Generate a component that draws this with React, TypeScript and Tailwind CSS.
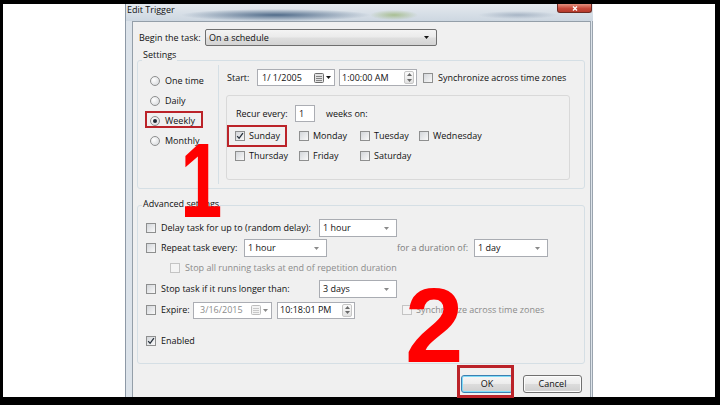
function Check({ on = false, dim = false }: { on?: boolean; dim?: boolean }) {
  const box = dim
    ? 'border-[#c4c4c4] bg-[#f4f4f4]'
    : 'border-[#8e8f8f] bg-[linear-gradient(135deg,#d3d6da,#f9f9f9)]';
  return (
    <span className={`flex h-[10px] w-[10px] shrink-0 items-center justify-center border ${box}`}>
      {on && (
        <svg width="8" height="8" viewBox="0 0 8 8">
          <path d="M1.2 4.1 3.1 6.3 6.9 1.1" fill="none" stroke="#27303b" strokeWidth="1.3" />
        </svg>
      )}
    </span>
  );
}

function Radio({ on = false }: { on?: boolean }) {
  return (
    <span className="flex h-[10px] w-[10px] shrink-0 items-center justify-center rounded-full border border-[#8e8f8f] bg-[radial-gradient(circle_at_35%_35%,#ffffff,#d2d4d7)]">
      {on && <span className="h-[4px] w-[4px] rounded-full bg-[#1d2733]" />}
    </span>
  );
}

function Arrow({ dark = false }: { dark?: boolean }) {
  return (
    <svg width="5" height="3" viewBox="0 0 5 3" className="shrink-0">
      <path d="M0 0h5L2.5 3z" fill={dark ? '#151515' : '#8a8a8a'} />
    </svg>
  );
}

function Combo({ value, size, plain = false }: { value: string; size: string; plain?: boolean }) {
  const look = plain
    ? 'border-[#a9acb2] bg-white'
    : 'rounded-[2px] border-[#6f6f6f] bg-[linear-gradient(#f4f4f4,#ebebeb_45%,#dedede_55%,#d3d3d3)]';
  return (
    <div className={`flex shrink-0 items-center justify-between border pl-[3px] pr-[7px] ${look} ${size}`}>
      <span>{value}</span>
      <Arrow dark={!plain} />
    </div>
  );
}

function CalendarIcon({ dim = false }: { dim?: boolean }) {
  const c = dim ? '#bdbdbd' : '#6c6c6c';
  return (
    <span className="flex items-center gap-[2px]">
      <svg width="10" height="10" viewBox="0 0 10 10">
        <rect x="0.5" y="0.5" width="9" height="9" rx="1" fill={dim ? '#f3f3f3' : '#e2e2e2'} stroke={c} />
        <path d="M2 3.5h6M2 5.5h6M2 7.5h6" stroke={c} strokeWidth="0.8" />
      </svg>
      <Arrow dark={!dim} />
    </span>
  );
}

function Spinner() {
  return (
    <span className="flex h-[13px] w-[10px] shrink-0 flex-col items-center justify-around rounded-[2px] border border-[#c6c6c6] bg-[linear-gradient(#fbfbfb,#e2e2e2)]">
      <svg width="5" height="3" viewBox="0 0 5 3">
        <path d="M0 3h5L2.5 0z" fill="#6a6a6a" />
      </svg>
      <svg width="5" height="3" viewBox="0 0 5 3">
        <path d="M0 0h5L2.5 3z" fill="#6a6a6a" />
      </svg>
    </span>
  );
}

function DateField({ value, dim = false, size }: { value: string; dim?: boolean; size: string }) {
  return (
    <div className={`flex h-[17px] shrink-0 items-center justify-between border border-[#abadb3] bg-white pr-[3px] ${size}`}>
      <span className={dim ? 'pl-[6px] text-[#8b8b8b]' : 'pl-[4px]'}>{value}</span>
      <CalendarIcon dim={dim} />
    </div>
  );
}

function TimeField({ value, size }: { value: string; size: string }) {
  return (
    <div className={`flex h-[17px] shrink-0 items-center justify-between border border-[#abadb3] bg-white pl-[2px] pr-[2px] ${size}`}>
      <span>{value}</span>
      <Spinner />
    </div>
  );
}

function Day({ label, on = false, size }: { label: string; on?: boolean; size: string }) {
  return (
    <div className={`flex items-center gap-[4px] ${size}`}>
      <Check on={on} />
      <span>{label}</span>
    </div>
  );
}

export default function App() {
  return (
    <div className="relative h-[405px] w-[720px] overflow-hidden bg-black pb-[8px] pl-[3px] pr-[5px] pt-[4px] font-['Open_Sans',sans-serif] text-[9px] leading-[12px] text-[#111]">
      <div className="flex h-full bg-white">
        <div className="ml-[122px] flex h-full w-[468px] flex-col">
          {/* glass title bar */}
          <div className="flex h-[17px] shrink-0 items-start justify-between border-l border-[#8d99a6] bg-[radial-gradient(95px_6px_at_150px_11px,rgba(58,88,122,0.85),transparent),radial-gradient(24px_5px_at_268px_11px,rgba(150,178,112,0.7),transparent),radial-gradient(40px_4px_at_392px_11px,rgba(130,148,170,0.55),transparent),linear-gradient(#e4e9ee,#cdd7e1)]">
            <span className="ml-[1px] mt-[0px] text-[#111]">Edit Trigger</span>
            <div className="mr-[1px] flex h-[9px] w-[35px] items-center justify-center rounded-b-[3px] border border-t-0 border-[#6d2a22] bg-[linear-gradient(#e4917f,#c8493a_55%,#b53a2b)]">
              <svg width="6" height="5" viewBox="0 0 6 5">
                <path d="M1 0.5 5 4.5M5 0.5 1 4.5" stroke="#fff" strokeWidth="1.4" />
              </svg>
            </div>
          </div>

          <div className="flex min-h-0 flex-1 overflow-hidden">
            <div className="w-[7px] shrink-0 border-l border-[#8d99a6] bg-[#dce3ea]" />

            <div className="flex min-w-0 flex-1 flex-col border-l border-t border-[#949fa9] bg-[#f0f0f0]">
              {/* Begin the task */}
              <div className="mt-[7px] flex h-[17px] items-center pl-[6px]">
                <span className="w-[66px]">Begin the task:</span>
                <Combo value="On a schedule" size="h-[17px] w-[232px]" />
              </div>

              {/* Settings */}
              <div className="ml-[4px] mr-[5px] mt-[14px] rounded-[3px] border border-[#d5dfe5]">
                <div className="-mt-[12px] ml-[4px] h-[12px] w-fit bg-[#f0f0f0] px-[1px]">Settings</div>
                <div className="flex h-[127px]">
                  <div className="my-[4px] w-[81px] border-r border-[#d5dfe5] pl-[12px] pt-[6px]">
                    <div className="flex h-[20px] items-center gap-[5px]">
                      <Radio />
                      <span>One time</span>
                    </div>
                    <div className="flex h-[20px] items-center gap-[5px]">
                      <Radio />
                      <span>Daily</span>
                    </div>
                    <div className="flex h-[20px] items-center gap-[5px]">
                      <Radio on />
                      <span>Weekly</span>
                    </div>
                    <div className="flex h-[20px] items-center gap-[5px]">
                      <Radio />
                      <span>Monthly</span>
                    </div>
                  </div>

                  <div className="flex min-w-0 flex-1 flex-col pt-[8px]">
                    <div className="flex h-[17px] items-center pl-[8px]">
                      <span className="w-[30px]">Start:</span>
                      <DateField value="1/ 1/2005" size="w-[78px]" />
                      <div className="ml-[4px]">
                        <TimeField value="1:00:00 AM" size="w-[78px]" />
                      </div>
                      <div className="ml-[6px] flex items-center gap-[5px]">
                        <Check />
                        <span>Synchronize across time zones</span>
                      </div>
                    </div>

                    <div className="ml-[7px] mr-[14px] mt-[9px] h-[85px] rounded-[3px] border border-[#d9d9d9] pt-[9px]">
                      <div className="flex h-[17px] items-center pl-[9px]">
                        <span className="w-[59px]">Recur every:</span>
                        <div className="flex h-[17px] w-[20px] items-center border border-[#abadb3] bg-white pl-[3px]">1</div>
                        <span className="ml-[11px]">weeks on:</span>
                      </div>
                      <div className="mt-[4px] flex h-[20px] pl-[8px]">
                        <Day label="Sunday" on size="w-[64px]" />
                        <Day label="Monday" size="w-[61px]" />
                        <Day label="Tuesday" size="w-[59px]" />
                        <Day label="Wednesday" size="w-[70px]" />
                      </div>
                      <div className="flex h-[20px] pl-[8px]">
                        <Day label="Thursday" size="w-[64px]" />
                        <Day label="Friday" size="w-[61px]" />
                        <Day label="Saturday" size="w-[59px]" />
                      </div>
                    </div>
                  </div>
                </div>
              </div>

              {/* Advanced settings */}
              <div className="ml-[4px] mr-[5px] mt-[16px] rounded-[3px] border border-[#d5dfe5] pb-[13px]">
                <div className="-mt-[8px] ml-[4px] h-[12px] w-fit bg-[#f0f0f0] px-[1px]">Advanced settings</div>
                <div className="pl-[8px]">
                  <div className="mt-[9px] flex h-[18px] items-center">
                    <Check />
                    <span className="ml-[5px] w-[158px]">Delay task for up to (random delay):</span>
                    <Combo plain value="1 hour" size="h-[18px] w-[78px]" />
                  </div>
                  <div className="mt-[2px] flex h-[18px] items-center">
                    <Check />
                    <span className="ml-[5px] w-[83px]">Repeat task every:</span>
                    <Combo plain value="1 hour" size="h-[18px] w-[83px]" />
                    <span className="ml-[70px] w-[77px] text-[#7c7c7c]">for a duration of:</span>
                    <Combo plain value="1 day" size="h-[18px] w-[74px]" />
                  </div>
                  <div className="mt-[2px] flex h-[18px] items-center pl-[24px] text-[#8b8b8b]">
                    <Check dim />
                    <span className="ml-[5px]">Stop all running tasks at end of repetition duration</span>
                  </div>
                  <div className="mt-[3px] flex h-[18px] items-center">
                    <Check />
                    <span className="ml-[5px] w-[158px]">Stop task if it runs longer than:</span>
                    <Combo plain value="3 days" size="h-[18px] w-[78px]" />
                  </div>
                  <div className="mt-[3px] flex h-[18px] items-center">
                    <Check />
                    <span className="ml-[5px] w-[32px]">Expire:</span>
                    <DateField dim value="3/16/2015" size="w-[79px]" />
                    <div className="ml-[5px]">
                      <TimeField value="10:18:01 PM" size="w-[78px]" />
                    </div>
                    <div className="ml-[47px] flex items-center gap-[4px] text-[#8b8b8b]">
                      <Check dim />
                      <span>Synchronize across time zones</span>
                    </div>
                  </div>
                  <div className="mt-[13px] flex h-[18px] items-center">
                    <Check on />
                    <span className="ml-[5px]">Enabled</span>
                  </div>
                </div>
              </div>

              {/* dialog buttons */}
              <div className="mt-[11px] flex justify-end gap-[10px] pr-[8px]">
                <button className="flex h-[18px] w-[52px] items-center justify-center rounded-[3px] border border-[#3c7fb1] bg-[linear-gradient(#f6f6f6,#ececec_48%,#dcdcdc_52%,#cfcfcf)] shadow-[inset_0_0_0_1px_#7fdcf8]">
                  OK
                </button>
                <button className="flex h-[18px] w-[59px] items-center justify-center rounded-[3px] border border-[#707070] bg-[linear-gradient(#f6f6f6,#ececec_48%,#dcdcdc_52%,#cfcfcf)] shadow-[inset_0_0_0_1px_#fcfcfc]">
                  Cancel
                </button>
              </div>
            </div>

            <div className="w-[3px] shrink-0 border-l border-r border-[#9aa4ae] bg-[#dce3ea]" />
          </div>
        </div>
      </div>

      {/* step callouts */}
      <div className="absolute left-[145px] top-[111px] h-[17px] w-[58px] border-2 border-[#bb2329]" />
      <div className="absolute left-[227px] top-[125px] h-[22px] w-[60px] border-2 border-[#bb2329]" />
      <div className="absolute left-[457px] top-[365px] h-[33px] w-[57px] border-[3px] border-[#bb2329]" />
      <div className="absolute left-[164px] top-[128px] origin-right scale-x-[0.72] font-['Liberation_Sans',Arial,sans-serif] text-[105px] font-bold leading-none text-[#ff0000]">
        1
      </div>
      <div className="absolute left-[405px] top-[273px] font-['Liberation_Sans',Arial,sans-serif] text-[105px] font-bold leading-none text-[#ff0000]">
        2
      </div>
    </div>
  );
}
